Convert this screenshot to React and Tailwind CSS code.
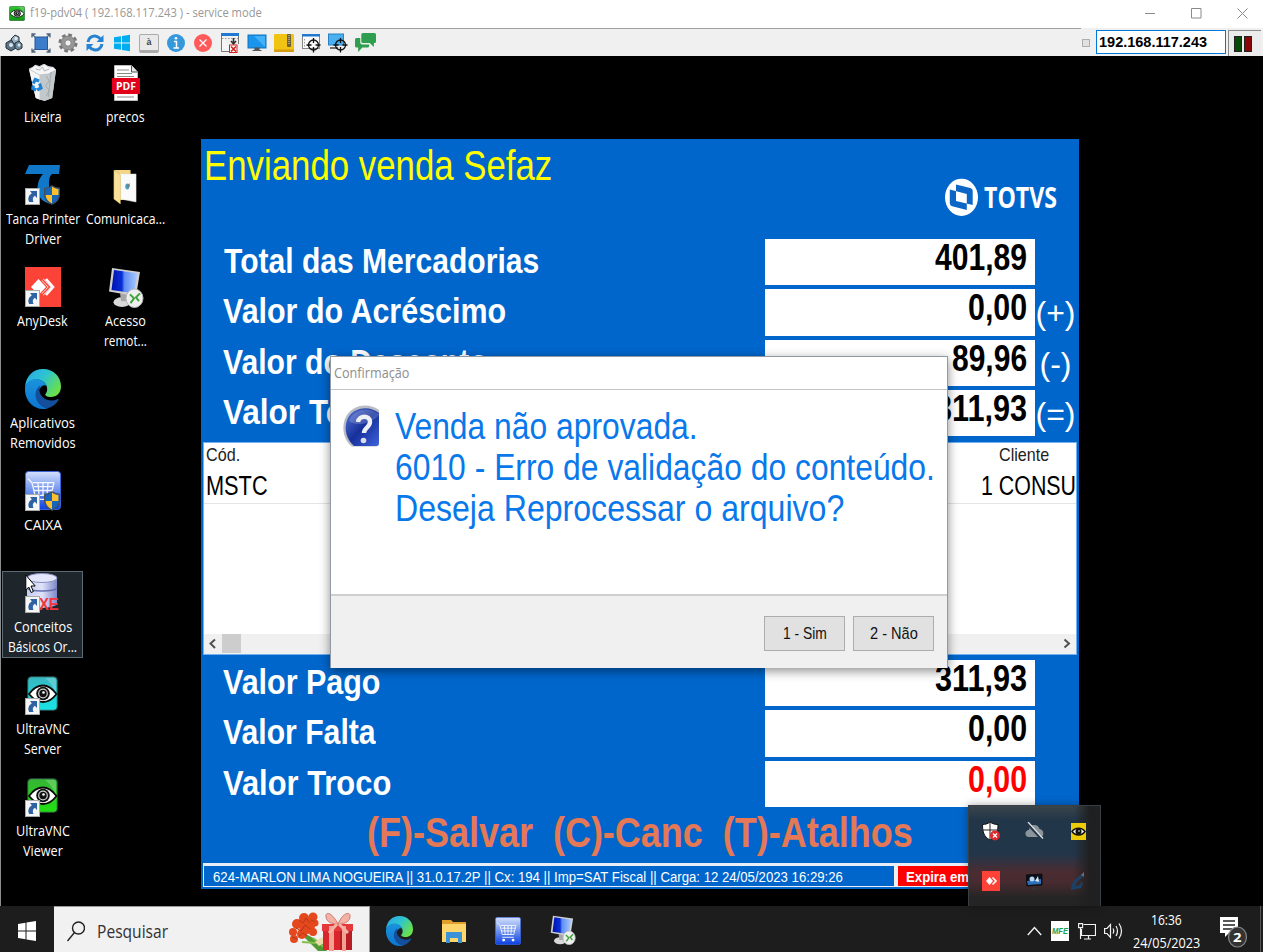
import React, { useLayoutEffect, useRef } from "react";

const ARIAL = "font-['Liberation_Sans',Arial,sans-serif]";
const SEGOE = "font-['Open_Sans','Noto_Sans',sans-serif]";

/* One line of text, condensed or widened to fill the width of its box. */
function Fit({ className = "", children }) {
  const outer = useRef(null);
  const inner = useRef(null);
  useLayoutEffect(() => {
    const natural = inner.current.offsetWidth;
    if (natural) {
      inner.current.style.transform = `scaleX(${outer.current.clientWidth / natural})`;
    }
  }, [children]);
  return (
    <div ref={outer} className={`shrink-0 whitespace-pre text-left ${className}`}>
      <span ref={inner} className="inline-block origin-left">
        {children}
      </span>
    </div>
  );
}

function Svg({ className, box = "0 0 24 24", children }) {
  return (
    <svg className={`block shrink-0 ${className}`} viewBox={box} preserveAspectRatio="none" fill="none">
      {children}
    </svg>
  );
}

/* ---------- shared drawings ---------- */

function Shortcut() {
  return (
    <Svg className="absolute left-0 bottom-0 w-[15px] h-[17px]" box="0 0 15 17">
      <rect x=".5" y=".5" width="14" height="16" fill="#f6f6f6" stroke="#a9a9a9" />
      <path d="M5 3h7v7l-2.200-2.200C7.500 9.500 7.400 11.500 8.500 14H4.200C2.500 10.500 3.600 7.500 6.800 5.200z" fill="#2f62a3" />
    </Svg>
  );
}

function Shield() {
  return (
    <Svg className="absolute left-[19px] bottom-0 w-[16px] h-[20px]" box="0 0 16 19">
      <path d="M8 .6C10 2.200 12.500 3 15.400 3v6c0 4.500-3 7.500-7.400 9.400C3.600 16.500.6 13.500.6 9V3C3.500 3 6 2.200 8 .6z" fill="#1565b8" />
      <path d="M8 1.500c2 1.400 4.300 2.200 6.500 2.300V9.500H8zM1.500 9.500H8v8C4 15.500 1.700 13 1.500 9.500z" fill="#fdbf2d" />
      <path d="M8 .6C10 2.200 12.500 3 15.400 3v6c0 4.500-3 7.500-7.400 9.400C3.600 16.500.6 13.500.6 9V3C3.500 3 6 2.200 8 .6z" stroke="#4a4a4a" />
    </Svg>
  );
}

function Edge({ className, id }) {
  return (
    <Svg className={className} box="0 0 36 40">
      <defs>
        <linearGradient id={id + "a"} x1="0" y1="0" x2="1" y2=".6">
          <stop offset="0" stopColor="#2aa6e8" />
          <stop offset=".5" stopColor="#2cc3d2" />
          <stop offset="1" stopColor="#6be04a" />
        </linearGradient>
        <linearGradient id={id + "b"} x1="0" y1="0" x2="0" y2="1">
          <stop offset="0" stopColor="#1a93dc" />
          <stop offset="1" stopColor="#0b76d0" />
        </linearGradient>
      </defs>
      <path d="M0 18C1 7 8 0 18 0c11 0 18 8 18 17.500C36 24 31.500 28 26 28c-4 0-6.500-1.500-5.500-3 1.500-2 2-4 1.500-6.500C21 13 16 10.500 11.500 10.500 6 10.500 1.500 14 0 18z" fill={`url(#${id}a)`} />
      <path d="M0 18c1.500-5 6-8 11-8 5 0 9.500 3 10.800 7-2-1.300-4.800-.6-6 1.500C11 21 10 38 23 39c-2 1-3.500 1-5 1C7 40-1 30 0 18z" fill={`url(#${id}b)`} />
      <path d="M14.500 17C8 22 9 36 22 39.300c5-1 9-4 11.500-8 .6-1-.3-1.600-1.200-1.100C24 34 15.500 29 14.500 22c-.3-2 0-4 1.300-5z" fill="#134f9c" />
    </Svg>
  );
}

function Cart({ className, id }) {
  return (
    <Svg className={className} box="0 0 36 40">
      <defs>
        <linearGradient id={id} x1="0" y1="0" x2="0" y2="1">
          <stop offset="0" stopColor="#d4e0fc" />
          <stop offset=".5" stopColor="#6f92ee" />
          <stop offset="1" stopColor="#0b3fe0" />
        </linearGradient>
      </defs>
      <rect x=".5" y=".5" width="35" height="39" rx="3" fill={`url(#${id})`} stroke="#3c66dc" />
      <path d="M3 8l4 4 3 13h16l3-13M8 12h21M9 16h19M9 20h18M13 12l1 13M18 12v13M23 12l-1 13M10 29h16" stroke="#fff" strokeWidth="1.300" opacity=".9" />
      <circle cx="12" cy="33" r="2" fill="#fff" />
      <circle cx="25" cy="33" r="2" fill="#fff" />
    </Svg>
  );
}

function Remote({ className, id }) {
  return (
    <Svg className={className} box="0 0 36 42">
      <defs>
        <linearGradient id={id} x1="0" y1="0" x2="1" y2="0">
          <stop offset="0" stopColor="#0012b0" />
          <stop offset=".4" stopColor="#0a2fd8" />
          <stop offset=".5" stopColor="#5f8cf4" />
          <stop offset="1" stopColor="#a9ccff" />
        </linearGradient>
      </defs>
      <ellipse cx="14" cy="36" rx="8.500" ry="5" fill="#d8d8d8" />
      <path d="M12 27h8l-1 8h-6z" fill="#a8a8a8" />
      <path d="M4 1l28 4-4 25L1 25z" fill="#cfcfcf" />
      <path d="M6 3l23.500 3.500L26 27 3.500 23.500z" fill={`url(#${id})`} />
      <ellipse cx="26.500" cy="32" rx="8.500" ry="9.500" fill="#efefef" stroke="#b5b5b5" />
      <path d="M22 28l4 4-3.500 5M32 27l-4 4 3 4" stroke="#3da33a" strokeWidth="2" />
    </Svg>
  );
}

function Vnc({ className, id, top, bottom }) {
  return (
    <Svg className={className} box="0 0 31 35">
      <defs>
        <linearGradient id={id} x1="0" y1="0" x2="0" y2="1">
          <stop offset="0" stopColor={top} />
          <stop offset="1" stopColor={bottom} />
        </linearGradient>
      </defs>
      <rect x=".7" y=".7" width="29.600" height="33.600" rx="3.500" fill={`url(#${id})`} stroke="#2b4440" />
      <path d="M18 2h9q2 0 2 3v13q-3-10-11-16z" fill="#fff" opacity=".22" />
      <path d="M2 18C7 11 11 9.500 16 9.500S25 12 29.500 18C25 24 21 26 16 26S7 24 2 18z" fill="#fff" stroke="#0a0a0a" strokeWidth="1.800" />
      <circle cx="16" cy="17.500" r="6.800" fill="#111" />
      <circle cx="16" cy="17.500" r="4.300" stroke="#cfcfcf" strokeWidth="1.200" />
      <circle cx="16.500" cy="16.500" r="1.300" fill="#fff" />
    </Svg>
  );
}

/* ---------- desktop icons ---------- */

function Bin() {
  return (
    <Svg className="w-[29px] h-[37px] ml-[3px] mt-[1px]" box="0 0 30 37">
      <path d="M1 5l3-1 3-3 5 1 4-2 5 2 4 1 4 3-4 28-8 3-9-3z" fill="#dfe3e5" />
      <path d="M1 5l11 4 1 27-5-2z" fill="#f3f5f6" />
      <path d="M12 9l17-4-4 29-8 3-5-2z" fill="#c3c8cb" />
      <path d="M1 5l4-2 3-2 4 2 5-3 4 3 5 0 3 3-8 4-9 1z" fill="#f6f6f6" stroke="#aab" strokeWidth=".6" />
      <path d="M8 5l4 1 3-3 2 4 5-2M24 8l-3 25M19 12l3 5-4 5 4 4-3 6" stroke="#9aa3a8" strokeWidth=".8" />
      <path d="M5.500 19.500l2-4 4 1.500M12 19.500l1.500 4.500-4 2M8.500 26l-3.500-1.500.5-3" stroke="#1d84d8" strokeWidth="3.200" />
    </Svg>
  );
}

function Pdf() {
  return (
    <div className="relative w-[28px] h-[36px] ml-[4px] mt-[2px]">
      <Svg className="w-[28px] h-[36px]" box="0 0 28 36">
        <path d="M2.500.5h17l6 6.500v28.500h-23z" fill="#fff" stroke="#bbb" />
        <path d="M19.500.5V7h6" fill="#e6e6e6" stroke="#555" />
        <path d="M5 5h12M5 8.500h15M5 11.500h17M5 32h17" stroke="#8a8a8a" />
        <rect x="0" y="13" width="28" height="16" fill="#e2001a" />
      </Svg>
      <div className={`absolute left-[4px] top-[13px] ${SEGOE} font-bold text-[11px] leading-[16px] text-white`}>
        <Fit className="w-[20px]">PDF</Fit>
      </div>
    </div>
  );
}

function Tanca() {
  return (
    <div className="relative w-[36px] h-[40px]">
      <Svg className="w-[36px] h-[40px]" box="0 0 36 40">
        <path d="M4 0h31l-1 9h-7C24.500 11 24 14 24 20c0 8 1 13 3 19-9-1-14.500-7-14.500-15C12.500 17 15 12 18 9H0z" fill="#1177c8" />
      </Svg>
      <Shortcut />
      <Shield />
    </div>
  );
}

function OpenFolder() {
  return (
    <Svg className="w-[24px] h-[35px] ml-[5px] mt-[4px]" box="0 0 26 35">
      <path d="M2 1h17v30H2z" fill="#f3d684" />
      <path d="M7 5l16 0v26L7 29z" fill="#f2f2f2" />
      <path d="M8 5l17 0v28L8 30z" fill="#fafafa" stroke="#ddd" strokeWidth=".5" />
      <path d="M1 1l7 5v29l-7-5z" fill="#fbe29b" stroke="#d7b65c" strokeWidth=".5" />
      <ellipse cx="15.500" cy="17.500" rx="2.200" ry="3" fill="#4d9fb8" />
      <path d="M15 17l3-3v4z" fill="#777" />
    </Svg>
  );
}

function AnyDesk() {
  return (
    <div className="relative w-[36px] h-[40px]">
      <Svg className="w-[36px] h-[40px]" box="0 0 36 40">
        <rect width="36" height="40" fill="#fb4437" />
        <path d="M6 20l7.500-8L21 20l-7.500 8z" fill="#fff" />
        <path d="M17.500 12.500L24.500 20l-7 7.500M21 12l7 8-7 8" stroke="#fff" strokeWidth="2.600" />
        <path d="M16 11l8.500 9L16 29" stroke="#fb4437" strokeWidth="1.500" />
      </Svg>
      <Shortcut />
    </div>
  );
}

function Database() {
  return (
    <div className="relative w-[36px] h-[40px]">
      <Svg className="w-[36px] h-[40px]" box="0 0 36 40">
        <defs>
          <linearGradient id="db" x1="0" y1="0" x2="1" y2="0">
            <stop offset="0" stopColor="#c6cbee" />
            <stop offset=".5" stopColor="#dfe3fa" />
            <stop offset="1" stopColor="#7d86c6" />
          </linearGradient>
        </defs>
        <path d="M2 5v26c3 5 27 5 30 0V5z" fill="url(#db)" />
        <ellipse cx="17" cy="5" rx="15" ry="4.500" fill="#e4e7fb" stroke="#8890c4" />
        <path d="M2 15c3 4 27 4 30 0" stroke="#6670ae" strokeWidth="1.500" />
      </Svg>
      <div className={`absolute left-[14px] top-[22px] ${ARIAL} font-bold text-[17px] leading-[19px] text-[#f5333a]`}>
        <Fit className="w-[20px]">XE</Fit>
      </div>
      <Shortcut />
    </div>
  );
}

function VncIcon({ id, top, bottom }) {
  return (
    <div className="relative w-[36px] h-[39px]">
      <Vnc className="w-[31px] h-[35px] ml-[2px] mt-px" id={id} top={top} bottom={bottom} />
      <Shortcut />
    </div>
  );
}

function DesktopItem({ icon, lines, selected }) {
  return (
    <div className="h-[102px] w-[83px]">
      <div
        className={
          selected
            ? "ml-[1px] flex h-[87px] w-[81px] flex-col items-center border border-[#5d6b74] bg-[#1e262b]"
            : "ml-[1px] flex h-[87px] w-[81px] flex-col items-center border border-transparent"
        }
      >
        <div className="h-[45px] w-[36px] pt-[1px]">{icon}</div>
        {lines.map(([text, width]) => (
          <div key={text} className={`${SEGOE} h-[20px] text-[14.5px] leading-[20px] text-white`}>
            <Fit className={width}>{text}</Fit>
          </div>
        ))}
      </div>
    </div>
  );
}

/* ---------- viewer toolbar ---------- */

function ToolbarIcons() {
  const c = "w-[20px] h-[20px]";
  return (
    <div className="flex items-center gap-[7px] pl-[4px]">
      <Svg className={c} box="0 0 20 20">
        <path d="M2 10l5-3 5 3v5l-5 3-5-3z" fill="#587184" stroke="#22323f" />
        <path d="M7 6l4-4 4 2v6l-5 1z" fill="#9fb4c2" stroke="#22323f" />
        <path d="M11 10l4-2 3 3v4l-4 2-3-2z" fill="#6c8798" stroke="#22323f" />
        <circle cx="7" cy="12" r="2" fill="#dbe6ee" /><circle cx="15" cy="12" r="1.500" fill="#dbe6ee" /><circle cx="12" cy="5.500" r="1.500" fill="#e8f0f5" />
      </Svg>
      <Svg className={c} box="0 0 20 20">
        <rect x="4" y="4" width="12.500" height="12.500" fill="#3d7cc9" stroke="#2458a0" />
        <path d="M1 4.500V1h3.500M15.500 1H19v3.500M19 15.500V19h-3.500M4.500 19H1v-3.500M1 1l3 3M19 1l-3 3M19 19l-3-3M1 19l3-3" stroke="#50637a" strokeWidth="1.300" />
      </Svg>
      <Svg className={c} box="0 0 20 20">
        <circle cx="10" cy="10" r="8" stroke="#757575" strokeWidth="3" strokeDasharray="3.600 2.680" />
        <circle cx="10" cy="10" r="5.300" stroke="#979797" strokeWidth="4" />
        <circle cx="10" cy="10" r="7" stroke="#777" strokeWidth=".7" />
        <circle cx="10" cy="10" r="3.200" fill="#f0f0f0" stroke="#666" strokeWidth=".8" />
      </Svg>
      <Svg className={c} box="0 0 20 20">
        <path d="M3 9C3.500 5 7 2.500 11 3.200c2 .3 3.500 1.500 4.500 3" stroke="#2583d2" strokeWidth="3" />
        <path d="M18.500 2v7h-7z" fill="#2583d2" />
        <path d="M17 11c-.5 4-4 6.500-8 5.800-2-.3-3.500-1.500-4.500-3" stroke="#2583d2" strokeWidth="3" />
        <path d="M1.500 18v-7h7z" fill="#2583d2" />
      </Svg>
      <Svg className={c} box="0 0 20 20">
        <path d="M2 4.200l7-1v6.300H2zM10 3l8-1.200v7.700h-8zM2 10.500h7v6.300l-7-1zM10 10.500h8v7.700L10 17z" fill="#00adef" />
      </Svg>
      <div className="flex h-[19px] w-[20px] items-center justify-center rounded-[2px] border border-[#aaa] border-b-[3px] bg-[#e9e9e9]">
        <span className={`${ARIAL} text-[9px] leading-[10px] font-bold text-[#444]`}>à</span>
      </div>
      <Svg className={c} box="0 0 20 20">
        <circle cx="10" cy="10" r="9" fill="#3498db" />
        <circle cx="10" cy="5.300" r="1.300" fill="#fff" />
        <path d="M8 8.500h2.500V15M7.500 15H13" stroke="#fff" strokeWidth="1.500" />
      </Svg>
      <Svg className={c} box="0 0 20 20">
        <circle cx="10" cy="10" r="9" fill="#ff5a5a" />
        <path d="M6.500 6.500l7 7M13.500 6.500l-7 7" stroke="#fff" strokeWidth="1.200" />
      </Svg>
      <Svg className={c} box="0 0 20 20">
        <path d="M1.500 1v17.500h9M18.500 1v10" stroke="#777" fill="#f5f5f5" />
        <rect x="1" y="0" width="18" height="3" fill="#1f79d0" />
        <path d="M2 5.500h16" stroke="#999" strokeDasharray="1.500 1.500" />
        <path d="M13.500 5v5M11 8l2.500 3L16 8" stroke="#333" strokeWidth="1.600" />
        <rect x="9.500" y="12" width="7.500" height="7.500" fill="#fff" stroke="#d02020" />
        <path d="M11 13.500l5 5M16 13.500l-5 5" stroke="#d02020" strokeWidth="1.600" />
      </Svg>
      <Svg className={c} box="0 0 20 20">
        <rect x="1" y="2" width="18" height="13" fill="#1b95ec" stroke="#1172bd" />
        <path d="M18 3v11L7 3z" fill="#43b0f8" />
        <path d="M8 15h4v2.500H8zM5.500 17.500h9" fill="#555" stroke="#555" strokeWidth="1.200" />
      </Svg>
      <Svg className={c} box="0 0 20 20">
        <rect x="0" y="1" width="20" height="18" rx="1" fill="#f1c312" />
        <path d="M0 16.500h20V18q0 1-1 1H1q-1 0-1-1z" fill="#d49a10" />
        <rect x="13" y="1" width="4" height="13" rx="1" fill="#6c6238" />
        <path d="M15 2v10" stroke="#ddd" strokeDasharray="1 1" />
      </Svg>
      <Svg className={c} box="0 0 20 20">
        <rect x="1.500" y="1.500" width="17" height="14" fill="#fafafa" stroke="#888" />
        <rect x="1" y="1" width="18" height="2.500" fill="#1f79d0" />
        <path d="M3.500 6v8" stroke="#999" strokeDasharray="1.500 1.500" />
        <circle cx="12.500" cy="12" r="5" stroke="#111" strokeWidth="1.300" />
        <path d="M12.500 5v5M12.500 14v5.500M5.500 12h5M14.500 12h5" stroke="#111" strokeWidth="1.300" />
      </Svg>
      <Svg className={c} box="0 0 20 20">
        <rect x=".5" y="1" width="15" height="11" fill="#4ab0f0" stroke="#2a80c0" />
        <path d="M2 15h8" stroke="#444" strokeWidth="1.500" />
        <circle cx="12.500" cy="12" r="5" stroke="#111" strokeWidth="1.300" />
        <path d="M12.500 5v5M12.500 14v5.500M5.500 12h5M14.500 12h5" stroke="#111" strokeWidth="1.300" />
      </Svg>
      <Svg className="h-[20px] w-[21px]" box="0 0 20 20">
        <path d="M7.500 0h11q1.500 0 1.500 1.500v7q0 1.500-1.500 1.500H18v4l-4-4H7.500Q6 10 6 8.500v-7Q6 0 7.500 0z" fill="#2f9e4f" />
        <path d="M1.500 5H5v4.500Q5 11.500 7 11.500h6.500V13q0 1.500-1.500 1.500H7L3 19v-4.500H1.500Q0 14.500 0 13V6.500Q0 5 1.500 5z" fill="#2f9e4f" />
      </Svg>
    </div>
  );
}

function Viewer() {
  return (
    <>
      <div className="flex h-[28px] items-center bg-white pl-[9px] pb-[2px]">
        <Vnc className="h-[15px] w-[16px]" id="vt" top="#2fc52f" bottom="#119911" />
        <div className={`ml-[5px] ${SEGOE} text-[12px] leading-[26px] text-[#979797]`}>
          <Fit className="w-[232px]">f19-pdv04 ( 192.168.117.243 ) - service mode</Fit>
        </div>
        <div className="ml-auto flex items-center gap-[35px] pr-[15px]">
          <Svg className="h-[12px] w-[11px]" box="0 0 11 12"><path d="M0 6.500h10" stroke="#8a8a8a" /></Svg>
          <Svg className="h-[12px] w-[11px]" box="0 0 11 12"><path d="M.5 1.500h9.500v9.500H.5z" stroke="#8a8a8a" /></Svg>
          <Svg className="h-[12px] w-[11px]" box="0 0 11 12"><path d="M.5 1.500l10 10M10.500 1.500l-10 10" stroke="#8a8a8a" /></Svg>
        </div>
      </div>
      <div className="flex h-[28px] bg-[#f0f0f0]">
        <div className="flex w-[1081px] items-center border-t border-[#a0a0a0] pt-[1px]">
          <ToolbarIcons />
        </div>
        <div className="flex flex-1 items-start pt-[2px]">
          <div className="mt-[9px] ml-[1px] h-[8px] w-[8px] border border-[#adadad] bg-[#e1e1e1]" />
          <div className={`ml-[6px] h-[24px] w-[130px] border border-[#0078d7] bg-white pl-[2px] ${ARIAL} text-[14.5px] font-bold leading-[22px] text-black`}>
            <Fit className="w-[108px]">192.168.117.243</Fit>
          </div>
          <div className="ml-[2px] flex h-[26px] w-[33px] items-center gap-[2px] border-t border-l border-[#8a8a8a] bg-[#ececec] pl-[5px]">
            <div className="h-[16px] w-[8px] border border-[#222] bg-[#084a08]" />
            <div className="h-[16px] w-[8px] border border-[#222] bg-[#8a0505]" />
          </div>
        </div>
      </div>
    </>
  );
}

/* ---------- point-of-sale window ---------- */

function Row({ label, labelWidth, indent = "pl-[22px]", value, valueWidth, sign, signWidth, red }) {
  return (
    <div className="flex h-[50.400px]">
      <div className={`w-[564px] text-[35.5px] font-bold leading-[49px] text-white ${indent}`}>
        <Fit className={labelWidth}>{label}</Fit>
      </div>
      <div
        className={`mt-[2px] flex h-[46.300px] w-[270px] justify-end bg-white pr-[8px] text-[36px] font-bold leading-[38px] ${
          red ? "text-[#ff0000]" : "text-black"
        }`}
      >
        <Fit className={valueWidth}>{value}</Fit>
      </div>
      {sign && (
        <div className="flex flex-1 justify-center pr-[3px] text-[32px] leading-[53px] text-white">
          <Fit className={signWidth}>{sign}</Fit>
        </div>
      )}
    </div>
  );
}

function Grid() {
  return (
    <div className="mx-[2px] mt-[3px] flex h-[213px] flex-col border border-[#6fb1f2] bg-white">
      <div className="flex h-[26px] justify-between pl-[2px] pr-[27px] text-[19px] leading-[24px] text-[#222]">
        <Fit className="w-[34px]">Cód.</Fit>
        <Fit className="w-[50px]">Cliente</Fit>
      </div>
      <div className="flex h-[35px] justify-between border-b border-[#e4e4e4] pl-[2px] text-[27px] leading-[34px] text-black">
        <Fit className="w-[62px]">MSTC</Fit>
        <Fit className="w-[95px]">1 CONSU</Fit>
      </div>
      <div className="flex-1" />
      <div className="flex h-[20px] items-center bg-[#f0f0f0]">
        <Svg className="h-[20px] w-[18px]" box="0 0 18 20"><path d="M11 5.500L6.500 9.500l4.500 4.500" stroke="#505050" strokeWidth="2" /></Svg>
        <div className="h-[19px] w-[19px] bg-[#cdcdcd]" />
        <Svg className="ml-auto h-[20px] w-[18px]" box="0 0 18 20"><path d="M6.500 5.500l4.500 4L6.500 13.500" stroke="#505050" strokeWidth="2" /></Svg>
      </div>
    </div>
  );
}

function Dialog() {
  return (
    <div className="absolute left-[129px] top-[217px] flex h-[312px] w-[618px] flex-col border-l border-r border-t border-[#8f9aa6] bg-white shadow-[0_3px_10px_rgba(0,0,0,0.45)]">
      <div className={`h-[33px] shrink-0 border-b border-[#c6c6c6] pl-[3px] pt-[5px] ${SEGOE} text-[14px] leading-[22px] text-[#8e8e8e]`}>
        <Fit className="w-[75px]">Confirmação</Fit>
      </div>
      <div className="flex h-[206px] shrink-0 border-b-2 border-[#cfcfcf] pl-[12px] pt-[15px]">
        <Svg className="h-[42px] w-[36px]" box="0 0 36 42">
          <defs>
            <linearGradient id="q" x1="0" y1="0" x2="1" y2="1">
              <stop offset="0" stopColor="#5a78d8" />
              <stop offset=".5" stopColor="#16309a" />
              <stop offset="1" stopColor="#3f62dc" />
            </linearGradient>
          </defs>
          <path d="M36 5C26-3 7-1 1.500 15-2 27 3 37 9 41.500h24q3 0 3-3z" fill="#b9bcc4" />
          <path d="M36 8C26 0 9 2 4 15c-3.500 10 0 20 7 26h22q3 0 3-3z" fill="url(#q)" />
          <path d="M36 9C26 1 10 4 6 16c8 6 22 3 30-6z" fill="#fff" opacity=".18" />
          <path d="M15 17c1-7 12-7 12 0 0 5-6 6-6 11" stroke="#eef0f4" strokeWidth="4.400" />
          <circle cx="20.500" cy="35.500" r="2.800" fill="#dadde6" />
        </Svg>
        <div className="ml-[16px] pt-[1px] text-[37.5px] leading-[41.200px] text-[#0878ea]">
          <Fit className="w-[303px]">Venda não aprovada.</Fit>
          <Fit className="w-[540px]">6010 - Erro de validação do conteúdo.</Fit>
          <Fit className="w-[449px]">Deseja Reprocessar o arquivo?</Fit>
        </div>
      </div>
      <div className="flex flex-1 items-start justify-end gap-[8px] bg-[#f0f0f0] pr-[13px] pt-[20px] text-[17px] leading-[33px] text-[#111]">
        <div className="flex h-[35px] w-[81px] justify-center border border-[#adadad] bg-[#e1e1e1]">
          <Fit className="w-[44px]">1 - Sim</Fit>
        </div>
        <div className="flex h-[35px] w-[81px] justify-center border border-[#adadad] bg-[#e1e1e1]">
          <Fit className="w-[48px]">2 - Não</Fit>
        </div>
      </div>
    </div>
  );
}

function Pos() {
  return (
    <div className={`relative mt-[83px] flex h-[750px] w-[878px] flex-col bg-[#0066cc] ${ARIAL}`}>
      <div className="flex h-[98px] shrink-0 justify-between pl-[3px] pr-[22px] pt-[4px]">
        <div className="text-[43px] leading-[45px] text-[#ffff00]">
          <Fit className="w-[348px]">Enviando venda Sefaz</Fit>
        </div>
        <div className="flex pt-[35px]">
          <Svg className="h-[38px] w-[33px]" box="0 0 33 38">
            <ellipse cx="16.500" cy="19.300" rx="16.500" ry="18.600" fill="#fff" />
            <path fillRule="evenodd" d="M11 6.500l14.300 3.500q2.400.6 2.400 3V27l-16.700-4zM4.800 11.500l17 4.500v16l-14.600-3.800q-2.400-.6-2.400-3z" fill="#0b66c6" />
          </Svg>
          <div className={`ml-[6px] ${SEGOE} text-[28.500px] font-bold leading-[38px] text-white`}>
            <Fit className="w-[73px]">TOTVS</Fit>
          </div>
        </div>
      </div>
      <Row label="Total das Mercadorias" labelWidth="w-[315px]" indent="pl-[23px]" value="401,89" valueWidth="w-[92px]" />
      <Row label="Valor do Acréscimo" labelWidth="w-[283px]" value="0,00" valueWidth="w-[59px]" sign="(+)" signWidth="w-[40px]" />
      <Row label="Valor do Desconto" labelWidth="w-[265px]" value="89,96" valueWidth="w-[75px]" sign="(-)" signWidth="w-[32px]" />
      <Row label="Valor Total" labelWidth="w-[159px]" value="311,93" valueWidth="w-[92px]" sign="(=)" signWidth="w-[40px]" />
      <Grid />
      <div className="h-[3.500px] shrink-0" />
      <Row label="Valor Pago" labelWidth="w-[157px]" value="311,93" valueWidth="w-[92px]" />
      <Row label="Valor Falta" labelWidth="w-[153px]" value="0,00" valueWidth="w-[59px]" />
      <Row label="Valor Troco" labelWidth="w-[168px]" value="0,00" valueWidth="w-[59px]" red />
      <div className="h-[48px] pl-[166px] text-[42.5px] font-bold leading-[47px] text-[#e57855]">
        <Fit className="w-[546px]">{"(F)-Salvar  (C)-Canc  (T)-Atalhos"}</Fit>
      </div>
      <div className="mx-[2px] mt-[6px] flex h-[24px] border border-t-[3px] border-[#e8eef5] text-[15.5px] leading-[22px] text-white">
        <div className="w-[690px] pl-[9px]">
          <Fit className="w-[630px]">624-MARLON LIMA NOGUEIRA || 31.0.17.2P || Cx: 194 || Imp=SAT Fiscal || Carga: 12 24/05/2023 16:29:26</Fit>
        </div>
        <div className="flex-1 border-l-4 border-[#f0f0f0] bg-[#ff0000] pl-[8px] font-bold">
          <Fit className="w-[63px]">Expira em</Fit>
        </div>
      </div>
      <Dialog />
    </div>
  );
}

/* ---------- tray and taskbar ---------- */

function Tray() {
  return (
    <div className="absolute left-[968px] top-[749px] grid h-[101px] w-[133px] grid-cols-3 grid-rows-2 place-items-center border border-b-0 border-[#3a3f43] bg-[linear-gradient(90deg,transparent_80%,#202020_92%),linear-gradient(#3a444a_0%,#223649_14%,#22364a_48%,#4a2c31_66%,#482b30_76%,#242424_92%)] shadow-[0_0_8px_rgba(0,0,0,0.35)]">
      <Svg className="h-[20px] w-[18px]" box="0 0 18 20">
        <path d="M8 1c2.500 1.800 5 2.500 8 2.500C16 11 14 16 8 19 2 16 .5 11 .5 3.500 3 3.500 6 2.800 8 1z" fill="#fff" stroke="#111" />
        <path d="M8 2v16M1 9h14" stroke="#222" />
        <circle cx="13" cy="14.500" r="5" fill="#dd2a2e" />
        <path d="M11 12.500l4 4M15 12.500l-4 4" stroke="#fff" strokeWidth="1.300" />
      </Svg>
      <Svg className="h-[18px] w-[19px]" box="0 0 19 18">
        <path d="M4 15C-1 15-.5 8 4 8c.5-6 9-7 10.500-1C19 7 20 15 15 15z" fill="#8c949b" />
        <path d="M2 1l15 16" stroke="#26384a" strokeWidth="3" />
        <path d="M3 0l15 16.500" stroke="#dfe3e6" strokeWidth="1.300" />
      </Svg>
      <Svg className="h-[17px] w-[15px]" box="0 0 15 17">
        <rect width="15" height="17" fill="#eecb08" />
        <path d="M1 8.500C4 4 11 4 14 8.500 11 13 4 13 1 8.500z" fill="#fff" stroke="#111" strokeWidth="1.500" />
        <circle cx="7.500" cy="8.500" r="3" fill="#111" /><circle cx="8" cy="8" r=".8" fill="#fff" />
      </Svg>
      <Svg className="h-[20px] w-[18px]" box="0 0 18 20">
        <rect width="18" height="20" fill="#ff4238" />
        <path d="M4 10l3.500-4L11 10l-3.500 4z" fill="#fff" /><path d="M10.500 6.500L14 10l-3.500 3.500" stroke="#fff" strokeWidth="1.600" />
      </Svg>
      <Svg className="h-[17px] w-[17px]" box="0 0 17 17">
        <path d="M0 2l16-1v11L1 13z" fill="#07101c" stroke="#111" />
        <path d="M1 8l14-2v5L2 12z" fill="#2d6fb8" />
        <circle cx="6" cy="6" r="2.500" fill="#b9d6ef" /><path d="M9 8l3-5 1 6z" fill="#dce9f4" />
        <path d="M8 13v3M5 16h7" stroke="#333" strokeWidth="1.500" />
      </Svg>
      <Svg className="h-[19px] w-[16px]" box="0 0 16 19">
        <path d="M1 18C1 11 5 6 14 1l-2 5c-4 2-6 5-7 8l5-1 1-3 2 1-2 5z" fill="#1b4166" />
        <path d="M11 3l3-3v5z" fill="#65717c" />
      </Svg>
    </div>
  );
}

function Gift() {
  return (
    <Svg className="h-[39px] w-[65px]" box="0 0 65 39">
      <path d="M18 22l16 9 5 8h-9L17 26z" fill="#4f9a35" />
      <path d="M25 26l12 10M14 30l14 1" stroke="#86bf4d" strokeWidth="2" />
      <path d="M27 30l7-5 3 5-6 4z" fill="#ecd9a8" />
      <g fill="#e4481c">
        <circle cx="16" cy="6" r="5" /><circle cx="25" cy="5" r="4.500" /><circle cx="9" cy="12" r="5" /><circle cx="19" cy="14" r="8" />
        <circle cx="27" cy="11" r="3.500" /><circle cx="5" cy="20" r="4" /><circle cx="14" cy="22" r="5" /><circle cx="6" cy="27" r="4" /><circle cx="25" cy="20" r="4" />
      </g>
      <path d="M11 8l4 3 3-5 4 5M8 16l5 3 4-6 5 4M11 24l4-3 4 3M4 25l5 2M23 8l4 2" stroke="#b8381a" strokeWidth="1" />
      <rect x="35" y="14" width="29" height="24" fill="#d8262c" />
      <path d="M52 14h12v24H52z" fill="#b81d25" />
      <rect x="34" y="12" width="31" height="7" fill="#e4383b" />
      <path d="M41 14h5v25h-5zM54 14h4v25h-4z" fill="#f2a193" />
      <path d="M50 12C44 0 37-1 38 5s7 7 12 7zM50 12C55 0 63-1 62 5s-7 7-12 7z" fill="#f4b1a5" stroke="#cf7c72" />
      <path d="M49 12l-8 9M51 12l9 9" stroke="#f4b1a5" strokeWidth="3" />
    </Svg>
  );
}

function Taskbar() {
  return (
    <div className="flex h-[46px] w-full items-center bg-[#1d1d1d]">
      <div className="flex w-[54px] justify-center pt-[4px]">
        <Svg className="h-[20px] w-[18px]" box="0 0 18 20">
          <path d="M0 3l7.500-1.300v7.800H0zM8.500 1.500L18 0v9.500H8.500zM0 10.500h7.500v7.800L0 17zM8.500 10.500H18V20l-9.500-1.500z" fill="#fff" />
        </Svg>
      </div>
      <div className="flex h-[46px] w-[316px] items-center border-t border-r border-[#9a9a9a] bg-[#f1f1f1] pl-[13px]">
        <Svg className="mt-[3px] h-[21px] w-[18px]" box="0 0 18 21">
          <circle cx="11.500" cy="7" r="6" stroke="#222" strokeWidth="1.400" /><path d="M7.500 11.500L.5 20" stroke="#222" strokeWidth="1.400" />
        </Svg>
        <div className={`ml-[12px] mt-[3px] ${SEGOE} text-[18px] leading-[26px] text-[#333]`}>
          <Fit className="w-[71px]">Pesquisar</Fit>
        </div>
        <div className="ml-auto mr-[16px] pt-[4px]"><Gift /></div>
      </div>
      <Edge className="ml-[16px] mt-[3px] h-[30px] w-[27px]" id="e2" />
      <Svg className="ml-[29px] mt-[3px] h-[24px] w-[24px]" box="0 0 24 24">
        <path d="M0 1h9l2 2h13v20H0z" fill="#e0a12c" />
        <path d="M0 5h24v18H0z" fill="#ffd66b" />
        <path d="M4 13h16v11h-4v-5H8v5H4z" fill="#3a92d8" />
      </Svg>
      <Cart className="ml-[29px] mt-[3px] h-[28px] w-[26px]" id="c2" />
      <Remote className="ml-[29px] mt-[2px] h-[30px] w-[26px]" id="r2" />
      <div className="ml-auto flex h-[46px] items-center">
        <Svg className="mt-[3px] h-[10px] w-[15px]" box="0 0 15 10"><path d="M.8 9L7.500 1.500 14.200 9" stroke="#f2f2f2" strokeWidth="1.400" /></Svg>
        <div className={`ml-[9px] mt-[4px] h-[20px] w-[18px] bg-white pl-[1px] ${ARIAL} text-[8.5px] font-bold italic leading-[20px] text-[#18a050]`}>
          <Fit className="w-[16px]">MFE</Fit>
        </div>
        <Svg className="ml-[9px] mt-[4px] h-[18px] w-[18px]" box="0 0 18 18">
          <path d="M5.500 2.500h12v11h-14V7M10.500 14v3M6 17h7" stroke="#f2f2f2" strokeWidth="1.200" />
          <path d="M.6 1.600h4v4h-4zM2.500 6v11" stroke="#f2f2f2" strokeWidth="1.100" />
        </Svg>
        <Svg className="ml-[8px] mt-[4px] h-[18px] w-[19px]" box="0 0 19 18">
          <path d="M.6 6.500H3l3.500-4v13L3 11.500H.6z" stroke="#f2f2f2" strokeWidth="1.200" />
          <path d="M9 6.500q1.500 2.500 0 5M12 4q3 5 0 10M15 1.500q5 7.500 0 15" stroke="#f2f2f2" strokeWidth="1.200" />
        </Svg>
        <div className={`ml-[10px] flex w-[67px] flex-col items-center pt-[3px] ${SEGOE} text-[14px] leading-[23px] text-white`}>
          <Fit className="w-[31px]">16:36</Fit>
          <Fit className="w-[67px]">24/05/2023</Fit>
        </div>
        <div className="relative ml-[20px] mt-[6px] h-[32px] w-[28px]">
          <Svg className="h-[32px] w-[28px]" box="0 0 28 32">
            <path d="M0 1h18v16h-9l-4 4v-4H0z" fill="#fff" />
            <path d="M3 5h12M3 9h12M3 13h9" stroke="#222" strokeWidth="1.300" />
            <ellipse cx="17.500" cy="21" rx="9" ry="10" fill="#333" stroke="#888" strokeWidth="1.200" />
          </Svg>
          <div className={`absolute left-[13px] top-[12px] ${SEGOE} text-[13px] font-bold leading-[18px] text-white`}>
            <Fit className="w-[8px]">2</Fit>
          </div>
        </div>
        <div className="ml-[12px] mr-[2px] h-[46px] w-px bg-[#555]" />
      </div>
    </div>
  );
}

export default function App() {
  return (
    <div className="h-[952px] w-[1263px] overflow-hidden bg-black">
      <Viewer />
      <div className="relative flex h-[850px] border-l border-[#8c8c8c] bg-black">
        <div className="flex w-[200px] pt-[5px]">
          <div className="flex flex-col">
            <DesktopItem icon={<Bin />} lines={[["Lixeira", "w-[38px]"]]} />
            <DesktopItem icon={<Tanca />} lines={[["Tanca Printer", "w-[74px]"], ["Driver", "w-[36px]"]]} />
            <DesktopItem icon={<AnyDesk />} lines={[["AnyDesk", "w-[51px]"]]} />
            <DesktopItem icon={<Edge className="h-[40px] w-[36px]" id="e1" />} lines={[["Aplicativos", "w-[65px]"], ["Removidos", "w-[66px]"]]} />
            <DesktopItem
              icon={<div className="relative h-[40px] w-[36px]"><Cart className="h-[39px] w-[36px]" id="c1" /><Shortcut /><Shield /></div>}
              lines={[["CAIXA", "w-[38px]"]]}
            />
            <DesktopItem selected icon={<Database />} lines={[["Conceitos", "w-[58px]"], ["Básicos Or...", "w-[69px]"]]} />
            <DesktopItem icon={<VncIcon id="v1" top="#38b6c0" bottom="#19e4e6" />} lines={[["UltraVNC", "w-[54px]"], ["Server", "w-[37px]"]]} />
            <DesktopItem icon={<VncIcon id="v2" top="#36b436" bottom="#22e012" />} lines={[["UltraVNC", "w-[54px]"], ["Viewer", "w-[40px]"]]} />
          </div>
          <div className="flex flex-col">
            <DesktopItem icon={<Pdf />} lines={[["precos", "w-[39px]"]]} />
            <DesktopItem icon={<OpenFolder />} lines={[["Comunicaca...", "w-[79px]"]]} />
            <DesktopItem icon={<Remote className="h-[41px] w-[36px]" id="r1" />} lines={[["Acesso", "w-[41px]"], ["remot...", "w-[43px]"]]} />
          </div>
        </div>
        <Pos />
        <div className="absolute left-[24px] top-[518px]">
          <Svg className="h-[20px] w-[11px]" box="0 0 11 20">
            <path d="M.8 1v15l3-3 2.300 5.500 2.300-1-2.400-5.500h4.200z" fill="#fff" stroke="#000" />
          </Svg>
        </div>
        <div className="absolute left-[-1px] top-0"><Tray /></div>
      </div>
      <Taskbar />
    </div>
  );
}
